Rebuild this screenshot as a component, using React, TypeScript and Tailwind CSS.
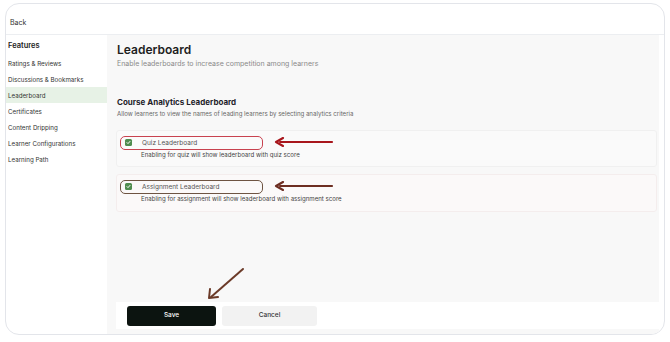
import React from 'react';

const features = [
  'Ratings & Reviews',
  'Discussions & Bookmarks',
  'Leaderboard',
  'Certificates',
  'Content Dripping',
  'Learner Configurations',
  'Learning Path',
];

const Check = () => (
  <span className="flex h-[7px] w-[7px] shrink-0 items-center justify-center rounded-[1.5px] bg-[#4f8d4f]">
    <svg width="5" height="5" viewBox="0 0 10 10" fill="none">
      <path d="M2 5.2l2 2 4-4.4" stroke="white" strokeWidth="2" strokeLinecap="round" strokeLinejoin="round" />
    </svg>
  </span>
);

const Arrow = ({ color }: { color: string }) => (
  <svg width="60" height="10" viewBox="0 0 60 10" fill="none">
    <path d="M58 5H6" stroke={color} strokeWidth="2.2" strokeLinecap="round" />
    <path d="M9 1L2 5l7 4" stroke={color} strokeWidth="2.2" strokeLinecap="round" strokeLinejoin="round" />
  </svg>
);

const Option = ({ label, desc, tint }: { label: string; desc: string; tint?: boolean }) => (
  <div
    className={
      tint
        ? 'h-[38px] rounded-[3px] border border-[#f4eded] bg-[#fbf9f9] pl-[8px] pt-[8px]'
        : 'h-[37px] rounded-[3px] border border-[#f0f0f0] bg-[#fafafa] pl-[8px] pt-[8px]'
    }
  >
    <div className="flex items-center gap-[10px]">
      <Check />
      <span className="text-[6.5px] leading-[8px] text-[#555]">{label}</span>
    </div>
    <div className="mt-[4px] pl-[16px] text-[6.1px] leading-[8px] text-[#444]">{desc}</div>
  </div>
);

const App = () => {
  return (
    <div className="h-[342px] w-[670px] bg-white pl-[5px] pt-[3px] font-['Inter',sans-serif] text-[#1c1c1c]">
      <div className="relative flex h-[332px] w-[660px] flex-col overflow-hidden rounded-[14px] border-[1.5px] border-[#e3e5ea] bg-white">
        {/* header */}
        <div className="flex h-[31px] shrink-0 items-center border-b border-[#eceef1] pl-[4px] pt-[8px] text-[7px] text-[#333]">
          Back
        </div>

        <div className="flex flex-1">
          {/* sidebar */}
          <div className="w-[101px] shrink-0 pt-[5px]">
            <div className="px-[2px] pb-[4px] text-[7.5px] font-semibold text-[#222]">Features</div>
            {features.map((f) => (
              <div
                key={f}
                className={
                  f === 'Leaderboard'
                    ? 'flex h-[16px] items-center bg-[#e7f2e6] px-[2px] text-[6.2px] text-[#333]'
                    : 'flex h-[16px] items-center px-[2px] text-[6.2px] text-[#333]'
                }
              >
                {f}
              </div>
            ))}
          </div>

          {/* main */}
          <div className="mr-[5px] flex flex-1 flex-col bg-[#f8f8f8] pb-[5px]">
            <div className="flex-1 pl-[9px] pr-[2px] pt-[7px]">
              <div className="pl-[1px] text-[12px] font-semibold leading-[15px] text-[#1e1e1e]">Leaderboard</div>
              <div className="mt-[2px] pl-[1px] text-[7px] text-[#8a8a8a]">
                Enable leaderboards to increase competition among learners
              </div>

              <div className="mt-[27px] pl-[1px] text-[8px] font-bold leading-[11px] text-[#1e1e2a]">
                Course Analytics Leaderboard
              </div>
              <div className="mt-[1px] pl-[1px] text-[6.1px] text-[#666]">
                Allow learners to view the names of leading learners by selecting analytics criteria
              </div>

              <div className="mt-[12px] flex flex-col gap-[7px]">
                <Option label="Quiz Leaderboard" desc="Enabling for quiz will show leaderboard with quiz score" />
                <Option
                  tint
                  label="Assignment Leaderboard"
                  desc="Enabling for assignment will show leaderboard with assignment score"
                />
              </div>
            </div>

            {/* footer */}
            <div className="ml-[9px] flex h-[27px] shrink-0 gap-[6px] bg-white pl-[11px] pt-[4px]">
              <button className="h-[20px] w-[89px] rounded-[3px] bg-[#0c1410] text-[6.5px] font-medium text-white">
                Save
              </button>
              <button className="h-[20px] w-[95px] rounded-[3px] bg-[#f2f2f2] text-[6.5px] font-medium text-[#333]">
                Cancel
              </button>
            </div>
          </div>
        </div>

        {/* annotations */}
        <div className="absolute left-[114px] top-[132px] h-[14px] w-[143px] rounded-[5px] border-[1.5px] border-[#c8424f]" />
        <div className="absolute left-[114px] top-[176px] h-[14px] w-[143px] rounded-[5px] border-[1.5px] border-[#6e5442]" />
        <div className="absolute left-[268px] top-[133px]">
          <Arrow color="#a8161c" />
        </div>
        <div className="absolute left-[268px] top-[177px]">
          <Arrow color="#6d2e22" />
        </div>
        <svg className="absolute left-[200px] top-[263px]" width="40" height="34" viewBox="0 0 40 34" fill="none">
          <path d="M37 2L5 30" stroke="#6b3a28" strokeWidth="2" strokeLinecap="round" />
          <path d="M4 22L3 31l9-1" stroke="#6b3a28" strokeWidth="2" strokeLinecap="round" strokeLinejoin="round" />
        </svg>
      </div>
    </div>
  );
};

export default App;
